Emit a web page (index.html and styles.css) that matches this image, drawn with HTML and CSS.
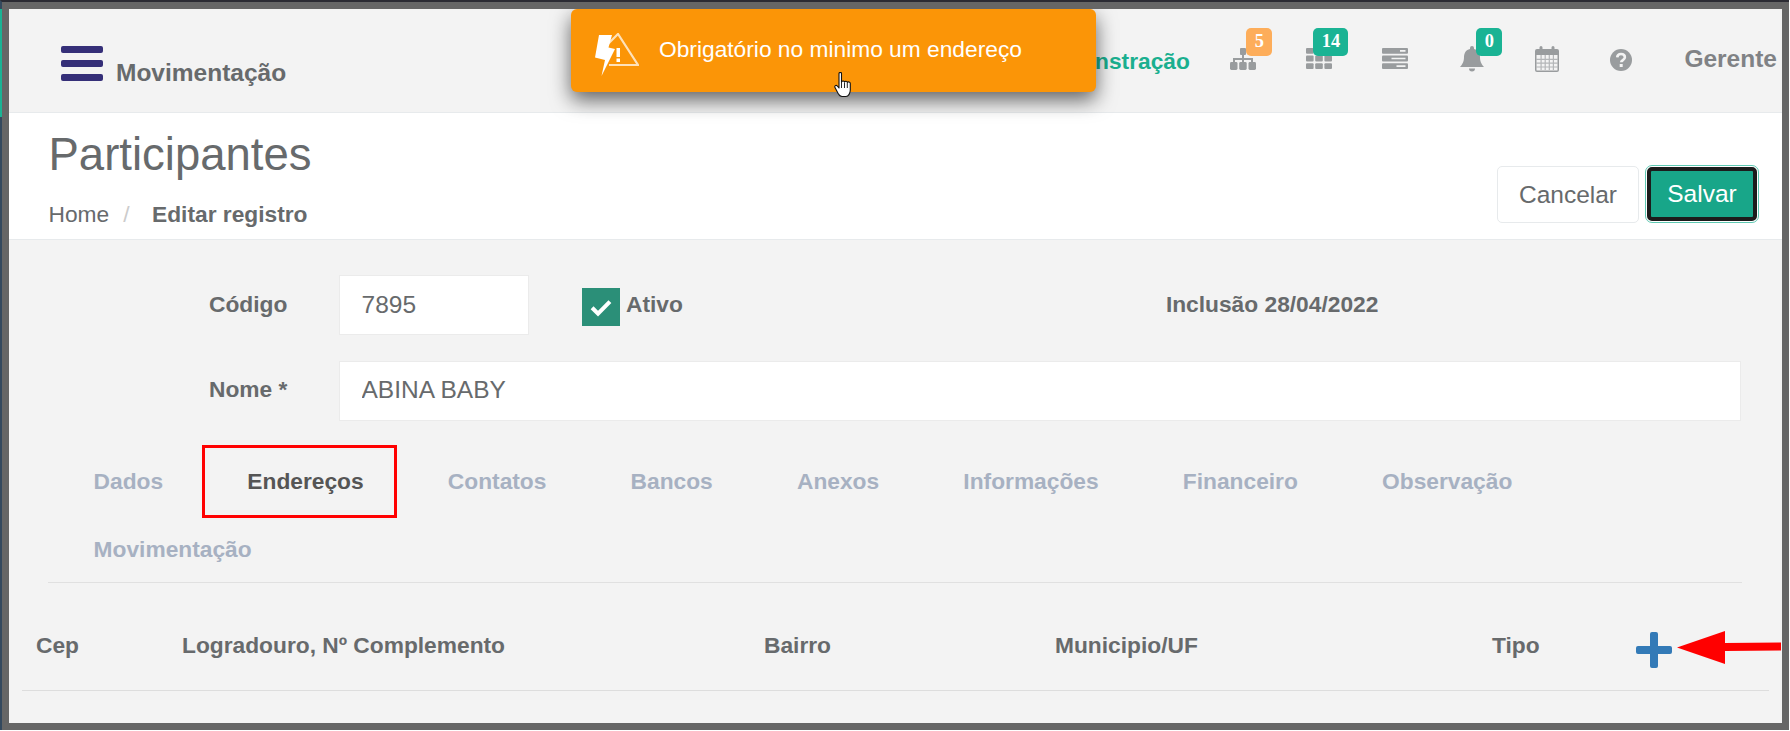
FILE: index.html
```html
<!DOCTYPE html>
<html lang="pt-BR">
<head>
<meta charset="utf-8">
<title>Participantes</title>
<link rel="stylesheet" href="styles.css">
</head>
<body>
<div class="screen">
  <div class="teal-strip"></div>
  <div class="window">
    <header class="topbar">
      <div class="topbar-left">
        <div class="burger"><span></span><span></span><span></span></div>
        <span class="module">Movimentação</span>
      </div>
      <nav class="topbar-right">
        <span class="company">Demonstração</span>
        <div class="nav-item">
          <svg class="ico" width="26" height="22" viewBox="0 0 26 22"><path d="M10 1a1 1 0 0 1 1-1h4a1 1 0 0 1 1 1v5a1 1 0 0 1-1 1h-1v3h9v4h-2v-2h-7v2h-2v-2H5v2H3v-4h9V7h-1a1 1 0 0 1-1-1z"/><rect x="0" y="14" width="7.5" height="8" rx="1.4"/><rect x="9.2" y="14" width="7.5" height="8" rx="1.4"/><rect x="18.5" y="14" width="7.5" height="8" rx="1.4"/></svg>
          <span class="badge badge-orange badge-a">5</span>
        </div>
        <div class="nav-item">
          <svg class="ico" width="26" height="21" viewBox="0 0 26 21"><rect x="0" y="0" width="7.6" height="5.8" rx="1"/><rect x="9.2" y="0" width="7.6" height="5.8" rx="1"/><rect x="0" y="7.600" width="7.6" height="5.8" rx="1"/><rect x="9.2" y="7.600" width="7.6" height="5.8" rx="1"/><rect x="18.4" y="7.600" width="7.6" height="5.8" rx="1"/><rect x="0" y="15.200" width="7.6" height="5.8" rx="1"/><rect x="9.2" y="15.200" width="7.6" height="5.8" rx="1"/><rect x="18.4" y="15.200" width="7.6" height="5.8" rx="1"/></svg>
          <span class="badge badge-green badge-b">14</span>
        </div>
        <div class="nav-item">
          <svg class="ico" width="26" height="21" viewBox="0 0 26 21"><rect width="26" height="5.800" rx="1"/><rect y="7.600" width="26" height="5.800" rx="1"/><rect y="15.200" width="26" height="5.800" rx="1"/><path d="M18 2.100h5.500v1.600H18zM9.500 9.700h14v1.600h-14zM14.500 17.300h9v1.600h-9z" fill="#f3f3f3"/></svg>
        </div>
        <div class="nav-item">
          <svg class="ico ico-tall ico-bell" width="24" height="26" viewBox="0 0 24 26"><path d="M12 0a2 2 0 0 1 2 2v1c4 .8 6 4 6 8 0 5 1.500 7 4 10H0c2.500-3 4-5 4-10 0-4 2-7.200 6-8V2a2 2 0 0 1 2-2zM9 22.500h6a3 3 0 0 1-6 0z"/></svg>
          <span class="badge badge-green badge-c">0</span>
        </div>
        <div class="nav-item">
          <svg class="ico ico-tall" width="24" height="26" viewBox="0 0 24 26"><path fill-rule="evenodd" d="M2 3h2.500V1.500a1.500 1.500 0 0 1 3 0V3h9V1.500a1.500 1.500 0 0 1 3 0V3H22a2 2 0 0 1 2 2v19a2 2 0 0 1-2 2H2a2 2 0 0 1-2-2V5a2 2 0 0 1 2-2zM1.500 9v15a.5.5 0 0 0 .5.5h20a.5.5 0 0 0 .5-.5V9z"/><path d="M1 13.300h22M1 17.200h22M1 21h22M6.100 9v15M10.200 9v15M14.300 9v15M18.400 9v15" stroke="#b4b6b8" stroke-width="1.200" fill="none"/></svg>
        </div>
        <div class="nav-item nav-item-help">
          <svg class="ico ico-low" width="22" height="22" viewBox="0 0 22 22"><circle cx="11" cy="11" r="11"/><path d="M7.200 8.400C7.400 6 9 5 11 5c2.300 0 3.900 1.300 3.900 3.200 0 2.900-3.700 2.800-3.700 5.100" fill="none" stroke="#f3f3f3" stroke-width="2.600"/><rect x="9.700" y="15" width="3" height="3" fill="#f3f3f3"/></svg>
        </div>
        <span class="user">Gerente</span>
      </nav>
    </header>

    <section class="page-head">
      <div>
        <h1 class="page-title">Participantes</h1>
        <ol class="crumbs">
          <li>Home</li>
          <li class="crumb-sep">/</li>
          <li class="crumb-current">Editar registro</li>
        </ol>
      </div>
      <div class="actions">
        <button class="btn btn-cancel" type="button">Cancelar</button>
        <button class="btn btn-save" type="button">Salvar</button>
      </div>
    </section>

    <section class="form">
      <div class="form-row">
        <label class="form-label">Código</label>
        <input class="field field-code" type="text" value="7895">
        <span class="check">
          <svg width="24" height="19" viewBox="0 0 20 16"><path d="M2.500 8.200l5 5L17.500 3" fill="none" stroke="#fff" stroke-width="3.400"/></svg>
        </span>
        <span class="check-label">Ativo</span>
        <span class="inclusion">Inclusão 28/04/2022</span>
      </div>
      <div class="form-row">
        <label class="form-label form-label-name">Nome *</label>
        <input class="field field-name" type="text" value="ABINA BABY">
      </div>
    </section>

    <ul class="tabs">
      <li>Dados</li>
      <li class="tab-active">Endereços</li>
      <li>Contatos</li>
      <li>Bancos</li>
      <li>Anexos</li>
      <li>Informações</li>
      <li>Financeiro</li>
      <li>Observação</li>
      <li>Movimentação</li>
    </ul>

    <div class="table-head">
      <span>Cep</span>
      <span>Logradouro, Nº Complemento</span>
      <span>Bairro</span>
      <span>Municipio/UF</span>
      <span>Tipo</span>
      <svg class="plus" width="36" height="36" viewBox="0 0 36 36"><path d="M14 2a2 2 0 0 1 2-2h4a2 2 0 0 1 2 2v12h12a2 2 0 0 1 2 2v4a2 2 0 0 1-2 2H22v12a2 2 0 0 1-2 2h-4a2 2 0 0 1-2-2V22H2a2 2 0 0 1-2-2v-4a2 2 0 0 1 2-2h12z" fill="#337ab7"/></svg>
    </div>

    <div class="red-box"></div>
    <svg class="red-arrow" width="104" height="34" viewBox="0 0 104 34"><path d="M0 16.500L48 0v12l56-.5v8l-56 .5v13z" fill="#f00"/></svg>

    <div class="toast">
      <svg class="toast-icon" width="44" height="43" viewBox="0 0 44 43"><path d="M13 11L23 1l20 31H14" fill="none" stroke="#fff" stroke-opacity=".72" stroke-width="2.200"/><path d="M4 2h13l-3.500 12.500 6.500 1.500L6.500 43 10 27 0 24.500z" fill="#fff"/><path d="M21.500 15H25v9h-3.500zM21.500 25.500H25V29h-3.500z" fill="#fff"/></svg>
      <span class="toast-text">Obrigatório no minimo um endereço</span>
    </div>
    <svg class="cursor" width="18" height="26" viewBox="0 0 18 26"><path d="M5 1.500c0-1.500 2.500-1.500 2.500 0V10c.5-1.300 2.700-1.300 3 0 .5-1 2.500-1 2.800.4.700-.9 3-.6 3 1.100v6.500c0 3-1.800 6.500-4.300 6.500H8c-2 0-3-1.500-4-3.300L1 15.500c-.8-1.500 1-3 2.300-1.500L5 16z" fill="#fff" stroke="#111" stroke-width="1.100" stroke-linejoin="round"/><path d="M7.500 10v6M10.500 10.500V16M13.300 11v5" stroke="#111" stroke-width=".9" fill="none"/></svg>
  </div>
</div>
</body>
</html>
```

FILE: styles.css
```css
* { box-sizing: border-box; }

html, body {
  margin: 0;
  height: 100%;
  background: #fff;
  overflow: hidden;
}

.screen {
  position: relative;
  width: 1789px;
  height: 730px;
  border-left: 2px solid #34495e;
  border-top: 2px solid #2b2b33;
  font-family: "Liberation Sans", Arial, sans-serif;
  color: #676a6c;
}

.teal-strip {
  position: absolute;
  left: -2px;
  top: 7px;
  width: 2px;
  height: 108px;
  background: #1ab394;
}

.window {
  position: relative;
  height: 100%;
  border: 7px solid #666;
  background: #f3f3f3;
  overflow: hidden;
}

/* top bar */
.topbar {
  display: flex;
  justify-content: space-between;
  height: 104px;
  border-bottom: 1px solid #e7eaec;
}

.topbar-left {
  display: flex;
  align-items: flex-end;
  gap: 13px;
  padding: 37px 0 31px 52px;
}

.burger {
  display: flex;
  flex-direction: column;
  gap: 7px;
  width: 42px;
}

.burger span {
  height: 7px;
  border-radius: 2px;
  background: #352f78;
}

.module {
  margin-bottom: -3.5px;
  font-size: 24.5px;
  font-weight: 700;
  line-height: 24px;
  color: #676a6c;
}

.topbar-right {
  display: flex;
  align-items: flex-start;
  padding-top: 30px;
}

.company {
  margin: 7px 15.5px 0 0;
  font-size: 22.750px;
  font-weight: 700;
  line-height: 30px;
  color: #1aaf8f;
}

.nav-item {
  position: relative;
  display: flex;
  justify-content: center;
  width: 76px;
  height: 34px;
  padding-top: 9px;
}

.nav-item-help {
  margin-left: -2.5px;
}

.ico {
  fill: #999c9e;
}

.ico-tall { margin-top: -2px; }
.ico-low { margin-top: 1px; }
.ico-bell { margin-left: 2px; }

.badge {
  position: absolute;
  top: -11px;
  height: 28px;
  border-radius: 5px;
  font-family: "Liberation Serif", "Times New Roman", serif;
  font-size: 18.4px;
  font-weight: 700;
  line-height: 27px;
  text-align: center;
  color: #fff;
}

.badge-orange { background: #fdad5a; }
.badge-green { background: #1ab394; }
.badge-a { left: 41px; width: 26px; }
.badge-b { left: 32px; width: 35px; }
.badge-c { left: 43px; width: 26px; }

.user {
  margin: 4.5px 5px 0 25.5px;
  font-size: 24.5px;
  font-weight: 700;
  line-height: 30px;
  color: #808285;
  white-space: nowrap;
}

/* page heading */
.page-head {
  display: flex;
  justify-content: space-between;
  align-items: flex-end;
  height: 127px;
  padding: 0 25px 16px 39.5px;
  background: #fff;
  border-bottom: 1px solid #e7eaec;
}

.page-title {
  margin: 0;
  font-size: 45.5px;
  font-weight: 400;
  line-height: 52px;
  color: #676a6c;
}

.crumbs {
  display: flex;
  margin: 0 0 -6px;
  padding: 18px 0 0;
  list-style: none;
  font-size: 22.750px;
  line-height: 30px;
}

.crumb-sep {
  padding: 0 22.5px 0 14px;
  color: #ccc;
}

.crumb-current {
  font-weight: 700;
}

.actions {
  display: flex;
  align-items: center;
  gap: 8px;
}

.btn {
  border-radius: 5px;
  font-family: inherit;
  font-size: 24.5px;
  padding: 0;
}

.btn-cancel {
  width: 142px;
  height: 57px;
  border: 1px solid #e7eaec;
  background: #fff;
  color: #676a6c;
}

.btn-save {
  width: 110px;
  height: 54px;
  margin-bottom: 1px;
  border: 4px solid #1c1c1c;
  background: #18a689;
  color: #fff;
  outline: 1px solid #5fc9b3;
  outline-offset: 1px;
}

/* form */
.form {
  display: flex;
  flex-direction: column;
  gap: 28px;
  padding: 36px 41px 0 200px;
}

.form-row {
  display: flex;
  align-items: center;
  height: 58px;
}

.form-label {
  width: 130px;
  flex: none;
  margin-top: -2px;
  font-size: 22.750px;
  font-weight: 700;
}

.form-label-name {
  margin-top: -4px;
}

.field {
  height: 60px;
  padding: 0 20px 0 21.5px;
  border: 1px solid #ebebeb;
  background: #fff;
  font-family: inherit;
  font-size: 24.5px;
  color: #676a6c;
}

.field-name {
  flex: 1;
  padding-bottom: 2px;
}

.field-code { width: 190px; }

.check {
  display: flex;
  align-items: center;
  justify-content: center;
  width: 38px;
  height: 38px;
  margin: 4px 0 0 53px;
  background: #2b8f78;
}

.check-label {
  margin: -1px 0 0 6px;
  font-size: 22.750px;
  font-weight: 700;
}

.inclusion {
  margin: -2px 0 0 483px;
  font-size: 22.750px;
  font-weight: 700;
}

/* tabs */
.tabs {
  display: flex;
  flex-wrap: wrap;
  height: 136px;
  margin: 26.5px 40px 0 39px;
  padding: 0 0 0 3.5px;
  list-style: none;
  border-bottom: 1px solid #e0e0e0;
}

.tabs li {
  padding: 0 42.1px;
  font-size: 22.750px;
  font-weight: 700;
  line-height: 68.5px;
  color: #a7b1c2;
}

.tab-active {
  color: #555 !important;
}

/* table header */
.table-head {
  display: grid;
  grid-template-columns: 146px 582px 291px 437px 144px 1fr;
  align-items: center;
  height: 108px;
  margin: 0 13px 0 13px;
  padding: 18px 0 0 14px;
  border-bottom: 1px solid #ddd;
  font-size: 22.750px;
  font-weight: 700;
}

.plus {
  display: block;
  margin-top: 9px;
}

/* annotations and overlays */
.red-box {
  position: absolute;
  left: 193px;
  top: 436px;
  width: 195px;
  height: 73px;
  border: 3px solid #f00;
}

.red-arrow {
  position: absolute;
  left: 1668px;
  top: 622px;
}

.toast {
  position: absolute;
  left: 562px;
  top: 0;
  display: flex;
  align-items: center;
  width: 525px;
  height: 83px;
  padding-bottom: 3px;
  border-radius: 6px;
  background: #fb9507;
  box-shadow: 0 8px 20px rgba(0, 0, 0, .6);
  color: #fff;
}

.toast-icon {
  align-self: flex-start;
  flex: none;
  margin: 24px 0 0 24px;
}

.toast-text {
  margin-left: 20px;
  font-size: 22.750px;
}

.cursor {
  position: absolute;
  left: 825px;
  top: 63px;
}
```
